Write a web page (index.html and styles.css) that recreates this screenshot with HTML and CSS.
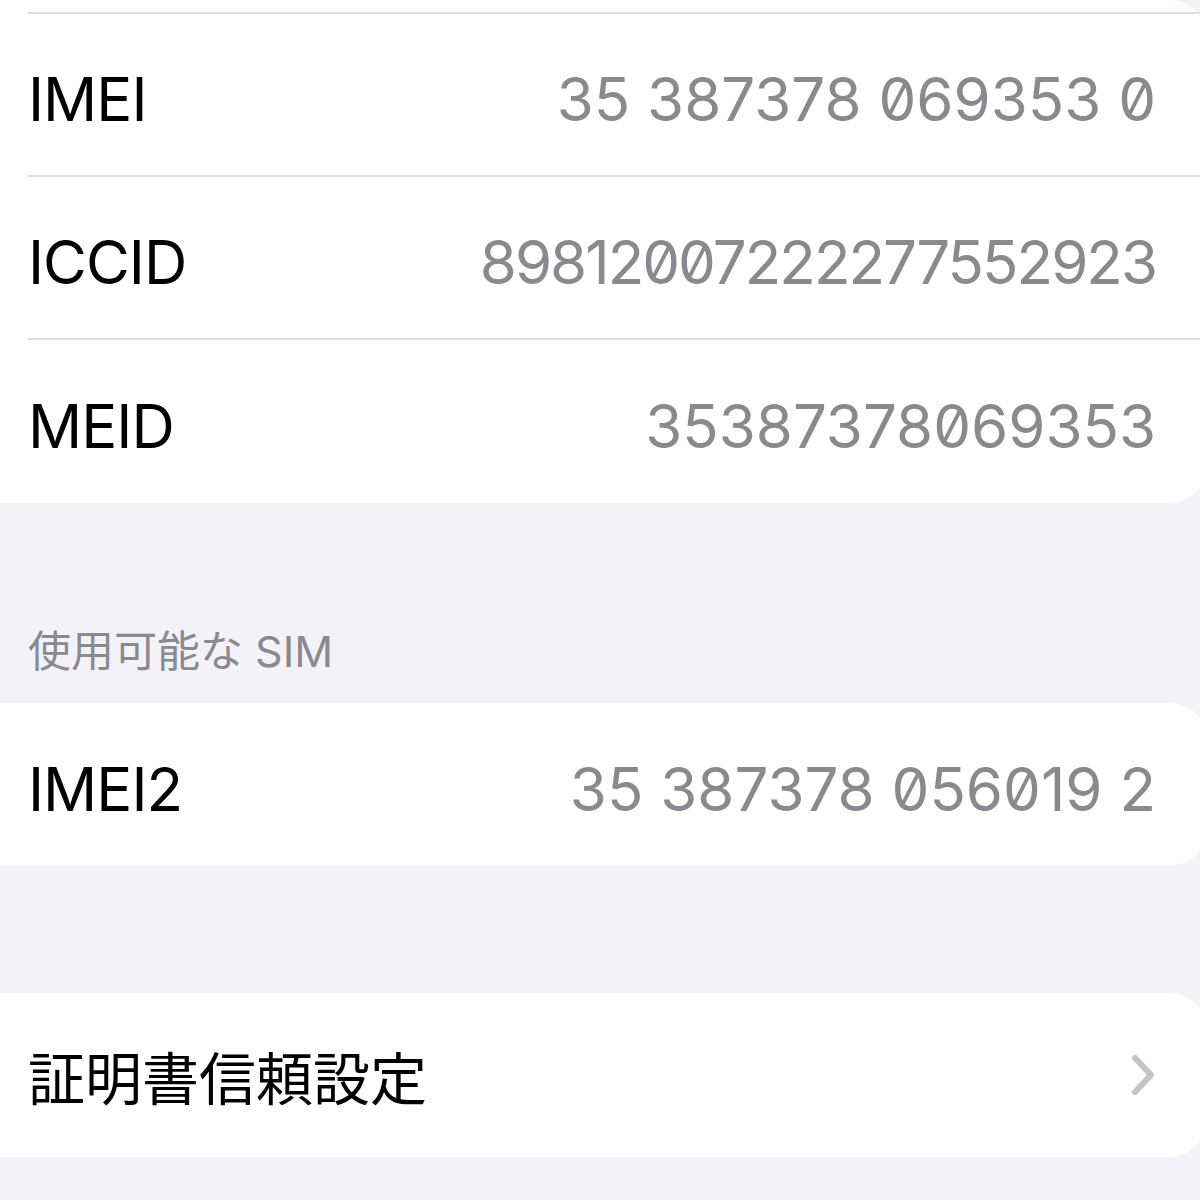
FILE: index.html
```html
<!DOCTYPE html>
<html>
<head>
	<title>情報</title>
	<meta charset="utf-8">
	<link rel="stylesheet" href="styles.css">
</head>
<body>
	<div class="page">
		<div class="card">
			<div class="row cut"></div>
			<div class="row">
				<span class="label">IMEI</span>
				<span class="value">35 387378 069353 0</span>
			</div>
			<div class="row">
				<span class="label">ICCID</span>
				<span class="value tight">89812007222277552923</span>
			</div>
			<div class="row">
				<span class="label">MEID</span>
				<span class="value">35387378069353</span>
			</div>
		</div>

		<div class="section-title">使用可能な SIM</div>

		<div class="card">
			<div class="row">
				<span class="label">IMEI2</span>
				<span class="value">35 387378 056019 2</span>
			</div>
		</div>

		<div class="card card-link">
			<div class="row">
				<span class="label jp">証明書信頼設定</span>
				<svg class="chevron" width="26" height="44" viewBox="0 0 26 44">
					<path d="M5 5 L21 22 L5 39" fill="none" stroke="#c4c4c8" stroke-width="6" stroke-linecap="round" stroke-linejoin="round"/>
				</svg>
			</div>
		</div>
	</div>
</body>
</html>
```

FILE: styles.css
```css
body{
	margin: 0;
	background-color: #f2f2f7;
	font-family: Inter, "Noto Sans CJK JP", sans-serif;
	overflow: hidden;
}
.page{
	width: 1200px;
	height: 1200px;
	overflow: hidden;
}
.card{
	background-color: #fff;
	margin-left: -40px;
	margin-right: -6px;
	border-radius: 36px;
	padding-left: 68px;
}
.row{
	box-sizing: border-box;
	height: 163px;
	display: flex;
	align-items: center;
	justify-content: space-between;
	padding-top: 8px;
	padding-right: 50px;
	border-bottom: 2px solid #dcdce0;
}
.row:last-child{
	border-bottom: none;
}
.row.cut{
	height: 14px;
	padding: 0;
}
.label{
	font-size: 60px;
	line-height: 72px;
	color: #000;
	letter-spacing: -1px;
}
.label.jp{
	font-family: "Noto Sans CJK JP", sans-serif;
	font-size: 57px;
	letter-spacing: 0;
}
.value{
	font-size: 60px;
	line-height: 72px;
	color: #8a8a8e;
	font-feature-settings: "zero" 1;
}
.value.tight{
	letter-spacing: -2px;
}
.section-title{
	box-sizing: border-box;
	height: 200px;
	padding: 122px 0 26px 28px;
	font-family: Inter, "Noto Sans CJK JP", sans-serif;
	font-size: 43px;
	line-height: 52px;
	color: #8a8a8e;
}
.card-link{
	margin-top: 127px;
}
.card-link .row{
	height: 164px;
	padding-top: 0;
}
.chevron{
	display: block;
}
```
